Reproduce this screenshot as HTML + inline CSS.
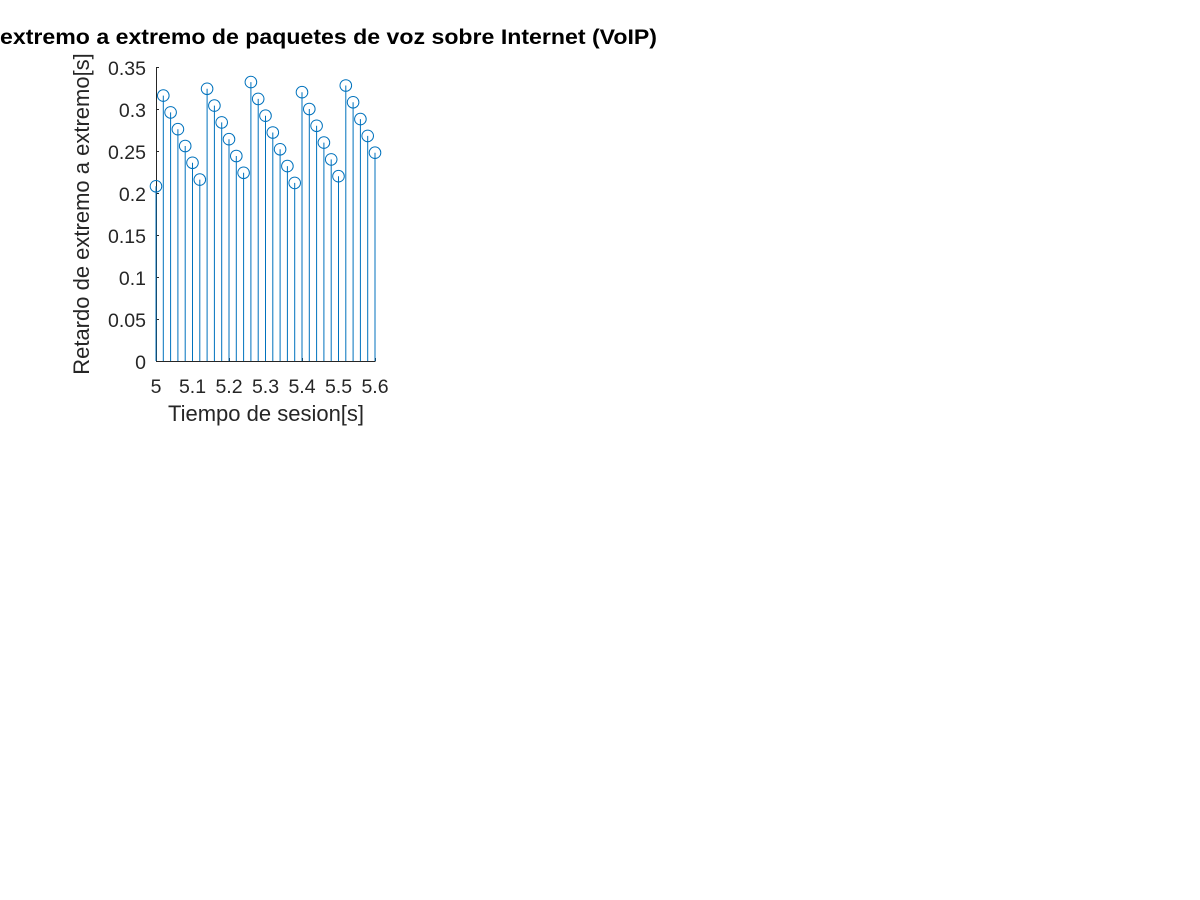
<!DOCTYPE html>
<html><head><meta charset="utf-8"><style>
html,body{margin:0;padding:0;background:#fff;width:1200px;height:900px;overflow:hidden}
svg{display:block}
text{font-family:"Liberation Sans",sans-serif;fill:#262626}
</style></head><body>
<svg width="1200" height="900" viewBox="0 0 1200 900" xmlns="http://www.w3.org/2000/svg">
<text x="0" y="44" font-size="21" font-weight="bold" style="fill:#000" textLength="657" lengthAdjust="spacingAndGlyphs">extremo a extremo de paquetes de voz sobre Internet (VoIP)</text>
<g stroke="#262626" stroke-width="1" fill="none">
<line x1="156.5" y1="67" x2="156.5" y2="361.5"/>
<line x1="156" y1="361.5" x2="375.5" y2="361.5"/>
<path d="M156 67.5h3M156 109.5h3M156 151.5h3M156 193.5h3M156 235.5h3M156 277.5h3M156 319.5h3"/>
<path d="M192.5 361v-3M229.5 361v-3M265.5 361v-3M302.5 361v-3M338.5 361v-3M375.5 361v-3"/>
</g>
<g font-size="19.5" text-anchor="end">
<text x="146" y="75">0.35</text><text x="146" y="117">0.3</text><text x="146" y="159">0.25</text><text x="146" y="201">0.2</text><text x="146" y="243">0.15</text><text x="146" y="285">0.1</text><text x="146" y="327">0.05</text><text x="146" y="369">0</text>
</g>
<g font-size="19.5" text-anchor="middle">
<text x="156" y="393">5</text><text x="192.5" y="393">5.1</text><text x="229" y="393">5.2</text><text x="265.5" y="393">5.3</text><text x="302" y="393">5.4</text><text x="338.5" y="393">5.5</text><text x="375" y="393">5.6</text>
</g>
<text x="266" y="421" font-size="22" text-anchor="middle">Tiempo de sesion[s]</text>
<text transform="translate(89,214) rotate(-90)" font-size="22" text-anchor="middle">Retardo de extremo a extremo[s]</text>
<g stroke="#0072BD" stroke-width="1" fill="none">
<path d="M156 361V186.3M163.3 361V95.6M170.6 361V112.4M177.9 361V129.2M185.2 361V146M192.5 361V162.8M199.8 361V179.6M207.1 361V88.8M214.4 361V105.6M221.7 361V122.4M229 361V139.2M236.3 361V156M243.6 361V172.8M250.9 361V82.1M258.2 361V98.9M265.5 361V115.7M272.8 361V132.5M280.1 361V149.3M287.4 361V166.1M294.7 361V182.9M302 361V92.2M309.3 361V109M316.6 361V125.8M323.9 361V142.6M331.2 361V159.4M338.5 361V176.2M345.8 361V85.5M353.1 361V102.3M360.4 361V119.1M367.7 361V135.9M375 361V152.7"/>
<circle cx="156" cy="186.3" r="5.8"/><circle cx="163.3" cy="95.6" r="5.8"/><circle cx="170.6" cy="112.4" r="5.8"/><circle cx="177.9" cy="129.2" r="5.8"/><circle cx="185.2" cy="146" r="5.8"/><circle cx="192.5" cy="162.8" r="5.8"/><circle cx="199.8" cy="179.6" r="5.8"/><circle cx="207.1" cy="88.8" r="5.8"/><circle cx="214.4" cy="105.6" r="5.8"/><circle cx="221.7" cy="122.4" r="5.8"/><circle cx="229" cy="139.2" r="5.8"/><circle cx="236.3" cy="156" r="5.8"/><circle cx="243.6" cy="172.8" r="5.8"/><circle cx="250.9" cy="82.1" r="5.8"/><circle cx="258.2" cy="98.9" r="5.8"/><circle cx="265.5" cy="115.7" r="5.8"/><circle cx="272.8" cy="132.5" r="5.8"/><circle cx="280.1" cy="149.3" r="5.8"/><circle cx="287.4" cy="166.1" r="5.8"/><circle cx="294.7" cy="182.9" r="5.8"/><circle cx="302" cy="92.2" r="5.8"/><circle cx="309.3" cy="109" r="5.8"/><circle cx="316.6" cy="125.8" r="5.8"/><circle cx="323.9" cy="142.6" r="5.8"/><circle cx="331.2" cy="159.4" r="5.8"/><circle cx="338.5" cy="176.2" r="5.8"/><circle cx="345.8" cy="85.5" r="5.8"/><circle cx="353.1" cy="102.3" r="5.8"/><circle cx="360.4" cy="119.1" r="5.8"/><circle cx="367.7" cy="135.9" r="5.8"/><circle cx="375" cy="152.7" r="5.8"/>
</g>
</svg>
</body></html>
